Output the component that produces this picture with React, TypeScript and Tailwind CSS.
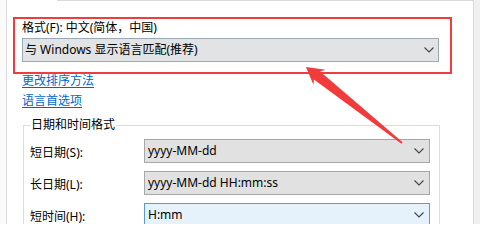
const FONT = "font-['Noto_Sans','Noto_Sans_CJK_SC',sans-serif]";

function Chevron() {
  return (
    <svg width="10" height="6" viewBox="0 0 10 6" className="shrink-0">
      <path d="M0.5 0.5 L5 5 L9.5 0.5" fill="none" stroke="#444" strokeWidth="1.1" />
    </svg>
  );
}

function Combo({ value, focused, className }: { value: string; focused?: boolean; className?: string }) {
  return (
    <div
      className={
        'h-6 flex items-center justify-between pr-[5px] border ' +
        (focused ? 'border-[#5b9bd5] bg-[#e5f1fb] ' : 'border-[#a7a7a7] bg-[#e1e1e1] ') +
        (className ?? '')
      }
    >
      <span className="pl-[3px] text-[12px] leading-4 text-black truncate">{value}</span>
      <Chevron />
    </div>
  );
}

const ROWS = [
  { label: '短日期(S):', value: 'yyyy-MM-dd' },
  { label: '长日期(L):', value: 'yyyy-MM-dd HH:mm:ss' },
  { label: '短时间(H):', value: 'H:mm', focused: true },
];

export default function App() {
  return (
    <div className={`relative w-[480px] h-[224px] overflow-hidden bg-white flex ${FONT}`}>
      {/* left gutter */}
      <div className="w-[6px] shrink-0 bg-[#fbfbfb]" />

      {/* tab page */}
      <div className="w-[468px] shrink-0 flex flex-col border-l border-r border-[#dadada]">
        {/* top edge of the tab page, hidden under the selected tab */}
        <div className="h-px ml-[50px] bg-[#d9d9d9] shrink-0" />

        <div className="pl-[15px] pt-[19px] flex flex-col">
          <div className="text-[12px] leading-4 text-black">格式(F): 中文(简体，中国)</div>

          <div className="mt-[2px] w-[417px] h-6 flex items-center justify-between pr-[4px] border border-[#9aa9b4] bg-[#e2e3e5]">
            <span className="pl-[2px] text-[12px] leading-4 text-black">与 Windows 显示语言匹配(推荐)</span>
            <Chevron />
          </div>

          <a className="mt-[11px] self-start text-[12px] leading-4 text-[#0066cc] underline underline-offset-2">
            更改排序方法
          </a>
          <a className="mt-1 self-start text-[12px] leading-4 text-[#0066cc] underline underline-offset-2">
            语言首选项
          </a>

          <fieldset className="mt-[9px] ml-px w-[417px] border border-[#dcdcdc] pl-[6px] pr-[7px] pb-4 flex flex-col gap-2">
            <legend className="px-px text-[12px] leading-[14px] text-black">日期和时间格式</legend>
            <div className="h-[7px] -mb-2" />
            {ROWS.map((r) => (
              <div key={r.label} className="flex items-center">
                <span className="w-[114px] shrink-0 mt-[3px] text-[12px] leading-4 text-black">{r.label}</span>
                <Combo value={r.value} focused={r.focused} className="w-[286px]" />
              </div>
            ))}
          </fieldset>
        </div>
      </div>

      {/* right gutter */}
      <div className="flex-1 bg-[#f0f0f0]" />

      {/* annotation: red frame */}
      <div className="absolute left-[13px] top-[17px] w-[439px] h-[57px] border-2 border-[#f03c3c]" />

      {/* annotation: red arrow */}
      <svg className="absolute inset-0 pointer-events-none" width="480" height="224" viewBox="0 0 480 224">
        <polygon
          points="306,67 325.5,69.8 320.1,71.6 402.6,142.2 401.4,143.8 313.9,79.6 313.5,85"
          fill="#f23b3b"
        />
      </svg>
    </div>
  );
}
